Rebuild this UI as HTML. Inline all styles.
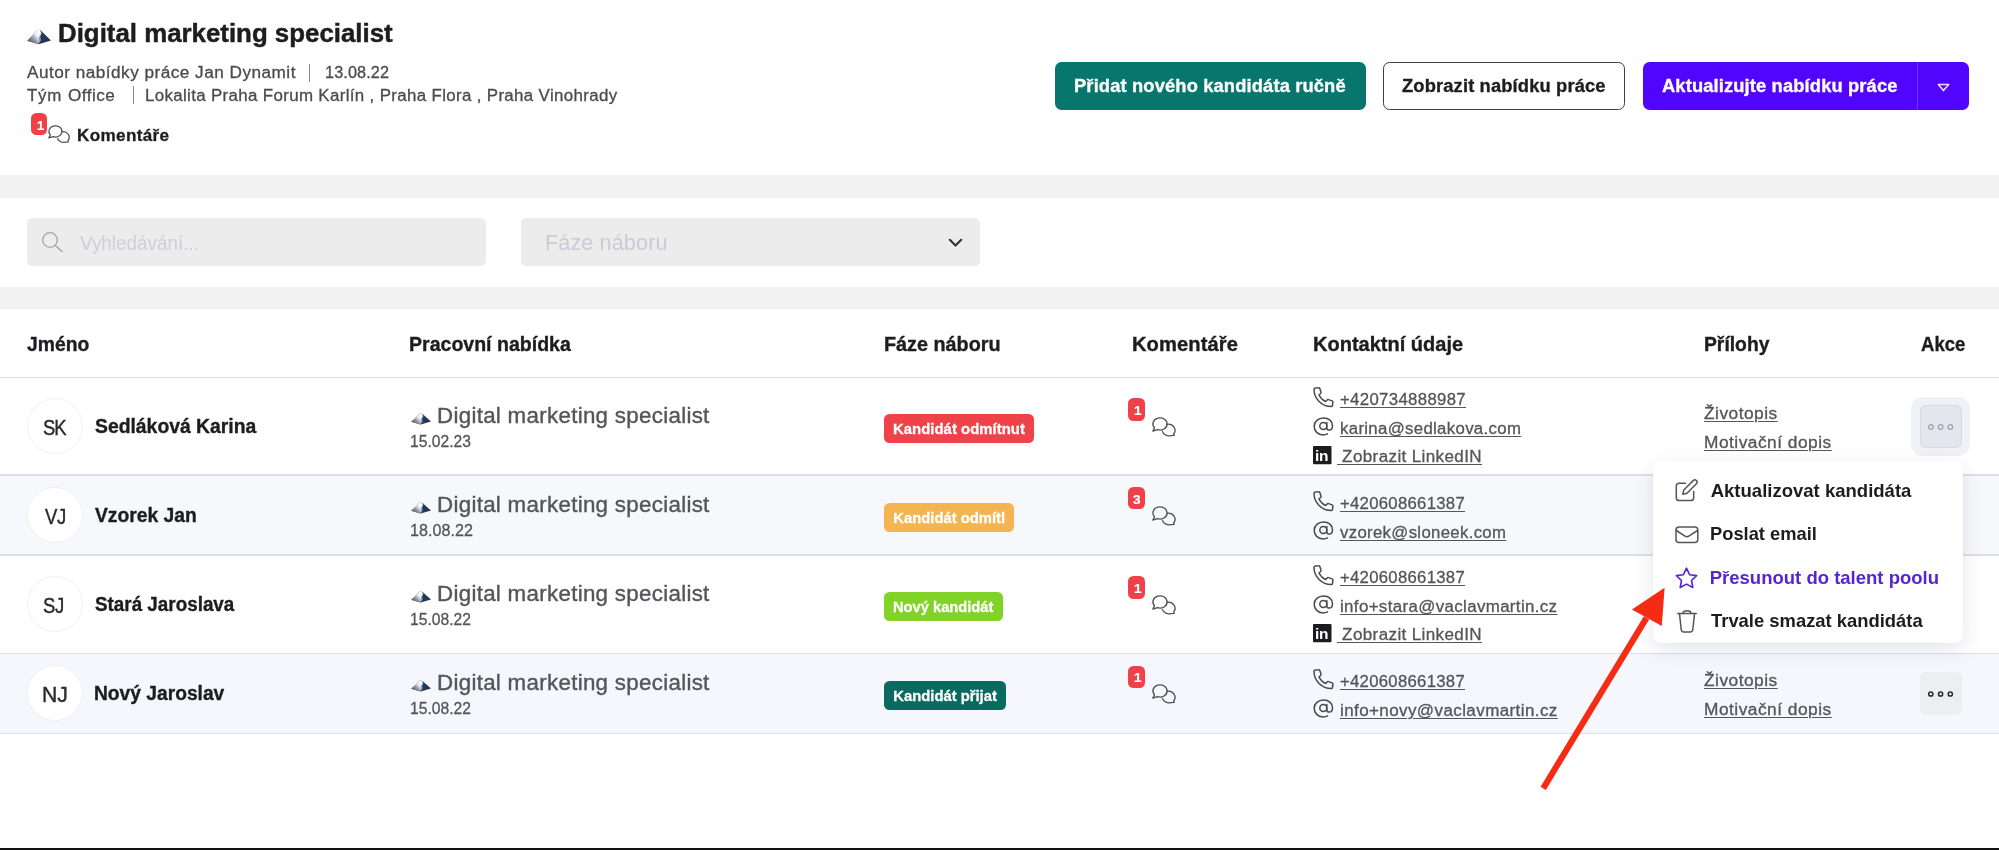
<!DOCTYPE html>
<html lang="cs"><head><meta charset="utf-8"><title>Digital marketing specialist</title><style>
*{box-sizing:border-box;margin:0;padding:0}
html,body{width:1999px;height:850px;overflow:hidden;background:#fff}
body{position:relative;font-family:"Liberation Sans", sans-serif;-webkit-font-smoothing:antialiased}
#app{position:absolute;left:0;top:0;width:1999px;height:850px;will-change:transform}
.tx{-webkit-text-stroke:0.018em;position:absolute;white-space:pre;line-height:1;display:block;transform-origin:0 50%}
.ph{-webkit-text-stroke:0}
.semi{-webkit-text-stroke:0}
.ul{text-decoration:underline;text-decoration-thickness:1.2px;text-underline-offset:2.2px;text-decoration-skip-ink:auto}
.ic{position:absolute;display:block;overflow:visible}
.band{position:absolute;left:0;width:1999px;background:#f1f1f1}
.field{position:absolute;top:218.200px;height:47.500px;background:#ececec;border-radius:5.500px}
.btn{position:absolute;top:62px;height:47.700px;border-radius:6.500px}
.hline{position:absolute;left:0;width:1999px;height:1.600px;background:#dcdfe6}
.rowbg{position:absolute;left:0;width:1999px;background:#f7f8fc}
.av{position:absolute;left:26.500px;width:56px;height:56px;border-radius:50%;background:#fff;border:1.500px solid #f0f0f2}
.badge{position:absolute;height:29.400px;border-radius:5.500px}
.cnt{position:absolute;width:17px;height:22.200px;border-radius:5.500px;background:#ef4147}
.sep{position:absolute;width:1.200px;height:18px;background:#8a8a90}
.menu{position:absolute;left:1652.500px;top:461px;width:310px;height:181.500px;background:#fff;border-radius:8px;box-shadow:0 7px 22px rgba(40,50,80,.12),0 0 2px rgba(40,50,80,.04)}
.act{position:absolute;width:42.500px;height:42.500px;border-radius:6px;background:#eceef2}
</style></head><body>
<div id="app">
<header>
<svg class="ic" style="left:27.2px;top:29.3px" width="24.2" height="15.4" viewBox="0 0 48 31" preserveAspectRatio="none"><defs><linearGradient id="ml27_29" x1="0" x2="1" y1="1" y2="0"><stop offset="0" stop-color="#3d424b"/><stop offset=".38" stop-color="#8e929d"/><stop offset=".62" stop-color="#e6e7f1"/><stop offset=".85" stop-color="#ffffff"/></linearGradient><linearGradient id="mr27_29" x1="0" x2="1" y1="0" y2="1"><stop offset="0" stop-color="#3c5a7a"/><stop offset=".5" stop-color="#1f3b5b"/><stop offset="1" stop-color="#2b2f4a"/></linearGradient></defs><path d="M0.500 23.500 L10 14 L19 3 C21 0.200 25 0 27.500 3 L47.500 23 L23 30.500 Z" fill="url(#mr27_29)"/><path d="M0.500 23.500 L10 14 L19 3 C21 0.500 24 0.200 26 1.500 L28 9 L24 17 L25 24 L22 30.500 Z" fill="url(#ml27_29)"/><path d="M24 1 L29.500 8 L26.500 15 L28 22 L23 30.500 L25 22 L23.500 15 L27 8 Z" fill="#dfe3ee" opacity=".55"/></svg>
<div class="sep" style="left:309px;top:63.500px"></div>
<div class="sep" style="left:132.500px;top:86px"></div>
<div class="cnt" style="left:30.800px;top:113.200px;width:16.600px;height:22.200px"></div>
<svg class="ic" style="left:47.6px;top:125.2px" width="22.1" height="18.4" viewBox="0 0 24 20" fill="none" stroke="#505057" stroke-width="1.35" stroke-linejoin="round" stroke-linecap="round"><path d="M0.900 14 L2.500 10.800 A7.100 6.100 0 1 1 5.600 12.700 Z"/><path d="M14.900 7.300 A6.800 6.100 0 0 1 21.600 17 L22.200 18.300 L19 18.600 A6.800 6.100 0 0 1 10.500 14.600"/></svg>
<div class="btn" style="left:1055px;width:310.500px;background:#07766c"></div>
<div class="btn" style="left:1382.500px;width:242.500px;background:#fff;border:1.900px solid #3d3d42"></div>
<div class="btn" style="left:1642.500px;width:326.200px;background:#5105fd"></div>
<div style="position:absolute;left:1917.300px;top:62px;width:1.200px;height:47.700px;background:#7236ff"></div>
<svg class="ic" style="left:1936.500px;top:83px" width="13" height="9" viewBox="0 0 13 9" fill="none" stroke="#f3d9ff" stroke-width="1.500" stroke-linejoin="round"><path d="M1.300 1.500h10.400L6.500 7.600z"/></svg>
<h1 class="tx" style="left:58.01px;top:18px;line-height:30px;font-size:26px;font-weight:700;color:#1d1d1f;letter-spacing:0.000px;transform:scaleX(0.9940)">Digital marketing specialist</h1>
<span class="tx" style="left:27.00px;top:64px;line-height:17px;font-size:16px;font-weight:400;color:#4b4b4f;letter-spacing:0.445px;transform:scaleX(1.0740)">Autor nabídky práce Jan Dynamit</span>
<span class="tx" style="left:324.99px;top:64px;line-height:17px;font-size:16px;font-weight:400;color:#4b4b4f;letter-spacing:0.102px;transform:scaleX(1.0145)">13.08.22</span>
<span class="tx" style="left:27.00px;top:87px;line-height:17px;font-size:16px;font-weight:400;color:#4b4b4f;letter-spacing:0.686px;transform:scaleX(1.0577)">Tým</span>
<span class="tx" style="left:68.00px;top:87px;line-height:17px;font-size:16px;font-weight:400;color:#4b4b4f;letter-spacing:0.453px;transform:scaleX(1.0714)">Office</span>
<span class="tx" style="left:144.94px;top:87px;line-height:17px;font-size:16px;font-weight:400;color:#4b4b4f;letter-spacing:0.321px;transform:scaleX(1.0562)">Lokalita Praha Forum Karlín , Praha Flora , Praha Vinohrady</span>
<span class="tx" style="left:77.26px;top:126px;line-height:18px;font-size:16.5px;font-weight:700;color:#1d1d1f;letter-spacing:0.319px;transform:scaleX(1.0381)">Komentáře</span>
<span class="tx" style="left:37.00px;top:118px;line-height:15px;font-size:13px;font-weight:700;color:#fff;letter-spacing:0.000px">1</span>
<span class="tx" style="left:1074.18px;top:76px;line-height:20px;font-size:18px;font-weight:700;color:#fff;letter-spacing:0.135px;transform:scaleX(1.0180)">Přidat nového kandidáta ručně</span>
<span class="tx" style="left:1402.00px;top:76px;line-height:20px;font-size:18px;font-weight:700;color:#1d1d1f;letter-spacing:0.136px;transform:scaleX(1.0181)">Zobrazit nabídku práce</span>
<span class="tx" style="left:1662.40px;top:76px;line-height:20px;font-size:18px;font-weight:700;color:#fff;letter-spacing:0.130px;transform:scaleX(1.0178)">Aktualizujte nabídku práce</span>
</header>
<section class="filters">
<div class="band" style="top:175px;height:22.500px"></div>
<div class="band" style="top:286.500px;height:22px"></div>
<div class="field" style="left:26.500px;width:459px"></div>
<div class="field" style="left:521px;width:458.500px"></div>
<svg class="ic" style="left:41px;top:231px" width="23" height="23" viewBox="0 0 23 23" fill="none" stroke="#a3a3ab" stroke-width="1.3" stroke-linecap="round"><circle cx="9" cy="9" r="7.300"/><path d="M14.400 14.600 21 20.600"/></svg>
<svg class="ic" style="left:948px;top:237.500px" width="15" height="10" viewBox="0 0 15 10" fill="none" stroke="#34343a" stroke-width="2.200" stroke-linecap="round" stroke-linejoin="round"><path d="M1.800 1.800 7.500 7.500 13.200 1.800"/></svg>
<span class="tx ph" style="left:80.00px;top:232px;line-height:22px;font-size:20px;font-weight:400;color:#cfcfd8;letter-spacing:0.000px;transform:scaleX(0.9442)">Vyhledávání...</span>
<span class="tx ph" style="left:544.99px;top:231px;line-height:24px;font-size:21.5px;font-weight:400;color:#cbcbd8;letter-spacing:0.078px;transform:scaleX(1.0081)">Fáze náboru</span>
</section>
<main class="table">
<div class="rowbg" style="top:475px;height:80px"></div>
<div class="rowbg" style="top:653.500px;height:80px;background:#f5f7fc"></div>
<div class="hline" style="top:376.6px"></div>
<div class="hline" style="top:474.4px"></div>
<div class="hline" style="top:554.2px"></div>
<div class="hline" style="top:652.5px"></div>
<div class="hline" style="top:732.8px"></div>
<div class="av" style="top:398.1px"></div>
<div class="av" style="top:486.9px"></div>
<div class="av" style="top:576.1px"></div>
<div class="av" style="top:665.2px"></div>
<div style="position:absolute;left:1911px;top:397px;width:59px;height:58.500px;border-radius:12px;background:#eff1f5"></div>
<div class="act" style="left:1919.500px;top:405px;background:#e3e6ec;border:1.200px solid #d6d9e1"></div>
<svg class="ic" style="left:1926px;top:421.500px" width="30" height="10" viewBox="0 0 30 10" fill="none" stroke="#9da2b3" stroke-width="1.300"><circle cx="4.800" cy="5" r="2.300"/><circle cx="14.600" cy="5" r="2.300"/><circle cx="24.300" cy="5" r="2.300"/></svg>
<div class="act" style="left:1919.500px;top:672px"></div>
<svg class="ic" style="left:1926px;top:688.500px" width="30" height="10" viewBox="0 0 30 10" fill="none" stroke="#2a2a2e" stroke-width="1.500"><circle cx="4.800" cy="5" r="2.100"/><circle cx="14.600" cy="5" r="2.100"/><circle cx="24.300" cy="5" r="2.100"/></svg>
<div class="badge" style="left:884.3px;top:413.7px;width:150px;background:#f04349"></div>
<div class="cnt" style="left:1128.3px;top:398.4px"></div>
<div class="badge" style="left:884.3px;top:502.5px;width:130px;background:#f4b550"></div>
<div class="cnt" style="left:1128.3px;top:487.2px"></div>
<div class="badge" style="left:884.3px;top:591.7px;width:118.8px;background:#82d328"></div>
<div class="cnt" style="left:1128.3px;top:576.4px"></div>
<div class="badge" style="left:884.3px;top:680.8px;width:121.8px;background:#0a6a60"></div>
<div class="cnt" style="left:1128.3px;top:665.5px"></div>
<svg class="ic" style="left:1151.5px;top:416.8px" width="24" height="20" viewBox="0 0 24 20" fill="none" stroke="#505057" stroke-width="1.35" stroke-linejoin="round" stroke-linecap="round"><path d="M0.900 14 L2.500 10.800 A7.100 6.100 0 1 1 5.600 12.700 Z"/><path d="M14.900 7.300 A6.800 6.100 0 0 1 21.600 17 L22.200 18.300 L19 18.600 A6.800 6.100 0 0 1 10.500 14.600"/></svg><svg class="ic" style="left:1312.8px;top:387.1px" width="21" height="21" viewBox="0 0 21 21" fill="none" stroke="#48484e" stroke-width="1.5" stroke-linejoin="round" stroke-linecap="round"><path d="M2.300 1.100 5.500.7c.6-.1 1.100.3 1.300.8l1.200 3.600c.2.500 0 1-.4 1.400L6 8c1.300 2.900 3.600 5.200 6.600 6.600l1.600-1.700c.4-.4.900-.5 1.400-.3l3.500 1.300c.5.200.9.700.8 1.300l-.4 3.100c-.1.700-.7 1.200-1.400 1.200C8.900 19.500 1 11.600 1 2.500c0-.7.600-1.300 1.300-1.400z"/></svg><svg class="ic" style="left:1313.2px;top:416.65000000000003px" width="21" height="19.400" viewBox="0 0 21 19" fill="none" stroke="#48484e" stroke-width="1.5" stroke-linecap="round"><circle cx="10.3" cy="8.700" r="3.500"/><path d="M13.800 5.200v5.300c0 1.400 1 2.400 2.400 2.400 2 0 3.300-1.800 3.300-4.400 0-4.500-3.800-7.700-9-7.700C5.200.800 1.200 4.300 1.200 9c0 4.900 3.600 8.700 8.900 8.700 1.700 0 3.200-.3 4.400-1"/></svg><svg class="ic" style="left:1312.8px;top:445.8px" width="19" height="18.500" viewBox="0 0 19 18.500"><rect width="18.500" height="18.200" rx="1" fill="#1c1c1e"/><text x="2.100" y="15.300" font-family='"Liberation Sans",sans-serif' font-weight="700" font-size="15.500" fill="#fff" letter-spacing="-0.5">in</text></svg><svg class="ic" style="left:1151.5px;top:505.6px" width="24" height="20" viewBox="0 0 24 20" fill="none" stroke="#505057" stroke-width="1.35" stroke-linejoin="round" stroke-linecap="round"><path d="M0.900 14 L2.500 10.800 A7.100 6.100 0 1 1 5.600 12.700 Z"/><path d="M14.900 7.300 A6.800 6.100 0 0 1 21.600 17 L22.200 18.300 L19 18.600 A6.800 6.100 0 0 1 10.500 14.600"/></svg><svg class="ic" style="left:1312.8px;top:490.90000000000003px" width="21" height="21" viewBox="0 0 21 21" fill="none" stroke="#48484e" stroke-width="1.5" stroke-linejoin="round" stroke-linecap="round"><path d="M2.300 1.100 5.500.7c.6-.1 1.100.3 1.300.8l1.200 3.600c.2.500 0 1-.4 1.400L6 8c1.300 2.900 3.600 5.200 6.600 6.600l1.600-1.700c.4-.4.900-.5 1.400-.3l3.500 1.300c.5.200.9.700.8 1.300l-.4 3.100c-.1.700-.7 1.200-1.400 1.200C8.900 19.500 1 11.600 1 2.500c0-.7.600-1.300 1.300-1.400z"/></svg><svg class="ic" style="left:1313.2px;top:520.8000000000001px" width="21" height="19.400" viewBox="0 0 21 19" fill="none" stroke="#48484e" stroke-width="1.5" stroke-linecap="round"><circle cx="10.3" cy="8.700" r="3.500"/><path d="M13.800 5.200v5.300c0 1.400 1 2.400 2.400 2.400 2 0 3.300-1.800 3.300-4.400 0-4.500-3.800-7.700-9-7.700C5.200.800 1.200 4.300 1.200 9c0 4.900 3.600 8.700 8.900 8.700 1.700 0 3.200-.3 4.400-1"/></svg><svg class="ic" style="left:1151.5px;top:594.8px" width="24" height="20" viewBox="0 0 24 20" fill="none" stroke="#505057" stroke-width="1.35" stroke-linejoin="round" stroke-linecap="round"><path d="M0.900 14 L2.500 10.800 A7.100 6.100 0 1 1 5.600 12.700 Z"/><path d="M14.900 7.300 A6.800 6.100 0 0 1 21.600 17 L22.200 18.300 L19 18.600 A6.800 6.100 0 0 1 10.500 14.600"/></svg><svg class="ic" style="left:1312.8px;top:565.1px" width="21" height="21" viewBox="0 0 21 21" fill="none" stroke="#48484e" stroke-width="1.5" stroke-linejoin="round" stroke-linecap="round"><path d="M2.300 1.100 5.500.7c.6-.1 1.100.3 1.300.8l1.200 3.600c.2.500 0 1-.4 1.400L6 8c1.300 2.900 3.600 5.200 6.600 6.600l1.600-1.700c.4-.4.900-.5 1.400-.3l3.500 1.300c.5.200.9.700.8 1.300l-.4 3.100c-.1.700-.7 1.200-1.400 1.200C8.900 19.500 1 11.600 1 2.500c0-.7.600-1.300 1.300-1.400z"/></svg><svg class="ic" style="left:1313.2px;top:594.65px" width="21" height="19.400" viewBox="0 0 21 19" fill="none" stroke="#48484e" stroke-width="1.5" stroke-linecap="round"><circle cx="10.3" cy="8.700" r="3.500"/><path d="M13.800 5.200v5.300c0 1.400 1 2.400 2.400 2.400 2 0 3.300-1.800 3.300-4.400 0-4.500-3.800-7.700-9-7.700C5.200.800 1.200 4.300 1.200 9c0 4.900 3.600 8.700 8.900 8.700 1.700 0 3.200-.3 4.400-1"/></svg><svg class="ic" style="left:1312.8px;top:623.8px" width="19" height="18.500" viewBox="0 0 19 18.500"><rect width="18.500" height="18.200" rx="1" fill="#1c1c1e"/><text x="2.100" y="15.300" font-family='"Liberation Sans",sans-serif' font-weight="700" font-size="15.500" fill="#fff" letter-spacing="-0.5">in</text></svg><svg class="ic" style="left:1151.5px;top:683.9px" width="24" height="20" viewBox="0 0 24 20" fill="none" stroke="#505057" stroke-width="1.35" stroke-linejoin="round" stroke-linecap="round"><path d="M0.900 14 L2.500 10.800 A7.100 6.100 0 1 1 5.600 12.700 Z"/><path d="M14.900 7.300 A6.800 6.100 0 0 1 21.600 17 L22.200 18.300 L19 18.600 A6.800 6.100 0 0 1 10.500 14.600"/></svg><svg class="ic" style="left:1312.8px;top:669.2px" width="21" height="21" viewBox="0 0 21 21" fill="none" stroke="#48484e" stroke-width="1.5" stroke-linejoin="round" stroke-linecap="round"><path d="M2.300 1.100 5.500.7c.6-.1 1.100.3 1.300.8l1.200 3.600c.2.500 0 1-.4 1.400L6 8c1.300 2.900 3.600 5.200 6.600 6.600l1.600-1.700c.4-.4.900-.5 1.400-.3l3.500 1.300c.5.200.9.700.8 1.300l-.4 3.100c-.1.700-.7 1.200-1.400 1.200C8.900 19.500 1 11.600 1 2.500c0-.7.600-1.300 1.300-1.400z"/></svg><svg class="ic" style="left:1313.2px;top:699.1px" width="21" height="19.400" viewBox="0 0 21 19" fill="none" stroke="#48484e" stroke-width="1.5" stroke-linecap="round"><circle cx="10.3" cy="8.700" r="3.500"/><path d="M13.800 5.200v5.300c0 1.400 1 2.400 2.400 2.400 2 0 3.300-1.800 3.300-4.400 0-4.500-3.800-7.700-9-7.700C5.200.800 1.200 4.300 1.200 9c0 4.900 3.600 8.700 8.900 8.700 1.700 0 3.200-.3 4.400-1"/></svg>
<svg class="ic" style="left:410.8px;top:412.90000000000003px" width="20.2" height="11.6" viewBox="0 0 48 31" preserveAspectRatio="none"><defs><linearGradient id="ml410_412" x1="0" x2="1" y1="1" y2="0"><stop offset="0" stop-color="#3d424b"/><stop offset=".38" stop-color="#8e929d"/><stop offset=".62" stop-color="#e6e7f1"/><stop offset=".85" stop-color="#ffffff"/></linearGradient><linearGradient id="mr410_412" x1="0" x2="1" y1="0" y2="1"><stop offset="0" stop-color="#3c5a7a"/><stop offset=".5" stop-color="#1f3b5b"/><stop offset="1" stop-color="#2b2f4a"/></linearGradient></defs><path d="M0.500 23.500 L10 14 L19 3 C21 0.200 25 0 27.500 3 L47.500 23 L23 30.500 Z" fill="url(#mr410_412)"/><path d="M0.500 23.500 L10 14 L19 3 C21 0.500 24 0.200 26 1.500 L28 9 L24 17 L25 24 L22 30.500 Z" fill="url(#ml410_412)"/><path d="M24 1 L29.500 8 L26.500 15 L28 22 L23 30.500 L25 22 L23.500 15 L27 8 Z" fill="#dfe3ee" opacity=".55"/></svg><svg class="ic" style="left:410.8px;top:501.70000000000005px" width="20.2" height="11.6" viewBox="0 0 48 31" preserveAspectRatio="none"><defs><linearGradient id="ml410_501" x1="0" x2="1" y1="1" y2="0"><stop offset="0" stop-color="#3d424b"/><stop offset=".38" stop-color="#8e929d"/><stop offset=".62" stop-color="#e6e7f1"/><stop offset=".85" stop-color="#ffffff"/></linearGradient><linearGradient id="mr410_501" x1="0" x2="1" y1="0" y2="1"><stop offset="0" stop-color="#3c5a7a"/><stop offset=".5" stop-color="#1f3b5b"/><stop offset="1" stop-color="#2b2f4a"/></linearGradient></defs><path d="M0.500 23.500 L10 14 L19 3 C21 0.200 25 0 27.500 3 L47.500 23 L23 30.500 Z" fill="url(#mr410_501)"/><path d="M0.500 23.500 L10 14 L19 3 C21 0.500 24 0.200 26 1.500 L28 9 L24 17 L25 24 L22 30.500 Z" fill="url(#ml410_501)"/><path d="M24 1 L29.500 8 L26.500 15 L28 22 L23 30.500 L25 22 L23.500 15 L27 8 Z" fill="#dfe3ee" opacity=".55"/></svg><svg class="ic" style="left:410.8px;top:590.9px" width="20.2" height="11.6" viewBox="0 0 48 31" preserveAspectRatio="none"><defs><linearGradient id="ml410_590" x1="0" x2="1" y1="1" y2="0"><stop offset="0" stop-color="#3d424b"/><stop offset=".38" stop-color="#8e929d"/><stop offset=".62" stop-color="#e6e7f1"/><stop offset=".85" stop-color="#ffffff"/></linearGradient><linearGradient id="mr410_590" x1="0" x2="1" y1="0" y2="1"><stop offset="0" stop-color="#3c5a7a"/><stop offset=".5" stop-color="#1f3b5b"/><stop offset="1" stop-color="#2b2f4a"/></linearGradient></defs><path d="M0.500 23.500 L10 14 L19 3 C21 0.200 25 0 27.500 3 L47.500 23 L23 30.500 Z" fill="url(#mr410_590)"/><path d="M0.500 23.500 L10 14 L19 3 C21 0.500 24 0.200 26 1.500 L28 9 L24 17 L25 24 L22 30.500 Z" fill="url(#ml410_590)"/><path d="M24 1 L29.500 8 L26.500 15 L28 22 L23 30.500 L25 22 L23.500 15 L27 8 Z" fill="#dfe3ee" opacity=".55"/></svg><svg class="ic" style="left:410.8px;top:680.0px" width="20.2" height="11.6" viewBox="0 0 48 31" preserveAspectRatio="none"><defs><linearGradient id="ml410_680" x1="0" x2="1" y1="1" y2="0"><stop offset="0" stop-color="#3d424b"/><stop offset=".38" stop-color="#8e929d"/><stop offset=".62" stop-color="#e6e7f1"/><stop offset=".85" stop-color="#ffffff"/></linearGradient><linearGradient id="mr410_680" x1="0" x2="1" y1="0" y2="1"><stop offset="0" stop-color="#3c5a7a"/><stop offset=".5" stop-color="#1f3b5b"/><stop offset="1" stop-color="#2b2f4a"/></linearGradient></defs><path d="M0.500 23.500 L10 14 L19 3 C21 0.200 25 0 27.500 3 L47.500 23 L23 30.500 Z" fill="url(#mr410_680)"/><path d="M0.500 23.500 L10 14 L19 3 C21 0.500 24 0.200 26 1.500 L28 9 L24 17 L25 24 L22 30.500 Z" fill="url(#ml410_680)"/><path d="M24 1 L29.500 8 L26.500 15 L28 22 L23 30.500 L25 22 L23.500 15 L27 8 Z" fill="#dfe3ee" opacity=".55"/></svg>
<span class="tx" style="left:27.00px;top:333px;line-height:22px;font-size:20px;font-weight:700;color:#1d1d1f;letter-spacing:0.000px;transform:scaleX(0.9650)">Jméno</span>
<span class="tx" style="left:409.42px;top:333px;line-height:22px;font-size:20px;font-weight:700;color:#1d1d1f;letter-spacing:0.000px;transform:scaleX(0.9771)">Pracovní nabídka</span>
<span class="tx" style="left:883.71px;top:333px;line-height:22px;font-size:20px;font-weight:700;color:#1d1d1f;letter-spacing:0.000px;transform:scaleX(0.9890)">Fáze náboru</span>
<span class="tx" style="left:1132.09px;top:333px;line-height:22px;font-size:20px;font-weight:700;color:#1d1d1f;letter-spacing:0.075px;transform:scaleX(1.0072)">Komentáře</span>
<span class="tx" style="left:1313.00px;top:333px;line-height:22px;font-size:20px;font-weight:700;color:#1d1d1f;letter-spacing:0.004px">Kontaktní údaje</span>
<span class="tx" style="left:1703.64px;top:333px;line-height:22px;font-size:20px;font-weight:700;color:#1d1d1f;letter-spacing:0.000px;transform:scaleX(0.9650)">Přílohy</span>
<span class="tx" style="left:1920.50px;top:333px;line-height:22px;font-size:20px;font-weight:700;color:#1d1d1f;letter-spacing:0.000px;transform:scaleX(0.9268)">Akce</span>
<span class="tx ini" style="left:43.00px;top:416px;line-height:24px;font-size:21.5px;font-weight:400;color:#2a2a2e;letter-spacing:-1.201px;transform:scaleX(0.8600)">SK</span>
<span class="tx" style="left:95.40px;top:415px;line-height:22px;font-size:20.3px;font-weight:700;color:#1d1d1f;letter-spacing:0.000px;transform:scaleX(0.9540)">Sedláková Karina</span>
<span class="tx" style="left:436.96px;top:404px;line-height:24px;font-size:21.5px;font-weight:400;color:#55555a;letter-spacing:0.285px;transform:scaleX(1.0385)">Digital marketing specialist</span>
<span class="tx" style="left:410.02px;top:433px;line-height:17px;font-size:16px;font-weight:400;color:#55555a;letter-spacing:0.000px;transform:scaleX(0.9775)">15.02.23</span>
<span class="tx" style="left:893.30px;top:421px;line-height:16px;font-size:14.8px;font-weight:700;color:#fff;letter-spacing:0.035px;transform:scaleX(1.0052)">Kandidát odmítnut</span>
<span class="tx" style="left:1133.90px;top:403px;line-height:15px;font-size:13.5px;font-weight:700;color:#fff;letter-spacing:0.000px">1</span>
<a class="tx ul" style="left:1340.20px;top:391px;line-height:17px;font-size:16px;font-weight:400;color:#55555a;letter-spacing:0.327px;transform:scaleX(1.0468)">+420734888987</a>
<a class="tx ul" style="left:1340.20px;top:420px;line-height:17px;font-size:16px;font-weight:400;color:#55555a;letter-spacing:0.315px;transform:scaleX(1.0484)">karina@sedlakova.com</a>
<a class="tx ul" style="left:1337.00px;top:448px;line-height:17px;font-size:16px;font-weight:400;color:#55555a;letter-spacing:0.356px;transform:scaleX(1.0642)">&nbsp;Zobrazit LinkedIN</a>
<a class="tx ul" style="left:1704.40px;top:405px;line-height:17px;font-size:16px;font-weight:400;color:#55555a;letter-spacing:0.447px;transform:scaleX(1.0831)">Životopis</a>
<a class="tx ul" style="left:1704.40px;top:434px;line-height:17px;font-size:16px;font-weight:400;color:#55555a;letter-spacing:0.459px;transform:scaleX(1.0818)">Motivační dopis</a>
<span class="tx ini" style="left:44.50px;top:505px;line-height:24px;font-size:21.5px;font-weight:400;color:#2a2a2e;letter-spacing:-0.503px;transform:scaleX(0.8600)">VJ</span>
<span class="tx" style="left:95.40px;top:504px;line-height:22px;font-size:20.3px;font-weight:700;color:#1d1d1f;letter-spacing:0.000px;transform:scaleX(0.9512)">Vzorek Jan</span>
<span class="tx" style="left:436.96px;top:493px;line-height:24px;font-size:21.5px;font-weight:400;color:#55555a;letter-spacing:0.285px;transform:scaleX(1.0385)">Digital marketing specialist</span>
<span class="tx" style="left:409.99px;top:522px;line-height:17px;font-size:16px;font-weight:400;color:#55555a;letter-spacing:0.039px;transform:scaleX(1.0055)">18.08.22</span>
<span class="tx" style="left:893.30px;top:510px;line-height:16px;font-size:14.8px;font-weight:700;color:#fff;letter-spacing:0.000px">Kandidát odmítl</span>
<span class="tx" style="left:1133.00px;top:492px;line-height:15px;font-size:13.5px;font-weight:700;color:#fff;letter-spacing:0.000px">3</span>
<a class="tx ul" style="left:1340.20px;top:495px;line-height:17px;font-size:16px;font-weight:400;color:#55555a;letter-spacing:0.295px;transform:scaleX(1.0420)">+420608661387</a>
<a class="tx ul" style="left:1340.20px;top:524px;line-height:17px;font-size:16px;font-weight:400;color:#55555a;letter-spacing:0.313px;transform:scaleX(1.0471)">vzorek@sloneek.com</a>
<span class="tx ini" style="left:43.00px;top:594px;line-height:24px;font-size:21.5px;font-weight:400;color:#2a2a2e;letter-spacing:-0.503px;transform:scaleX(0.8600)">SJ</span>
<span class="tx" style="left:95.40px;top:593px;line-height:22px;font-size:20.3px;font-weight:700;color:#1d1d1f;letter-spacing:0.000px;transform:scaleX(0.9291)">Stará Jaroslava</span>
<span class="tx" style="left:436.96px;top:582px;line-height:24px;font-size:21.5px;font-weight:400;color:#55555a;letter-spacing:0.285px;transform:scaleX(1.0385)">Digital marketing specialist</span>
<span class="tx" style="left:410.02px;top:611px;line-height:17px;font-size:16px;font-weight:400;color:#55555a;letter-spacing:0.000px;transform:scaleX(0.9775)">15.08.22</span>
<span class="tx" style="left:893.30px;top:599px;line-height:16px;font-size:14.8px;font-weight:700;color:#fff;letter-spacing:0.000px;transform:scaleX(0.9920)">Nový kandidát</span>
<span class="tx" style="left:1133.90px;top:581px;line-height:15px;font-size:13.5px;font-weight:700;color:#fff;letter-spacing:0.000px">1</span>
<a class="tx ul" style="left:1340.20px;top:569px;line-height:17px;font-size:16px;font-weight:400;color:#55555a;letter-spacing:0.295px;transform:scaleX(1.0420)">+420608661387</a>
<a class="tx ul" style="left:1340.20px;top:598px;line-height:17px;font-size:16px;font-weight:400;color:#55555a;letter-spacing:0.331px;transform:scaleX(1.0563)">info+stara@vaclavmartin.cz</a>
<a class="tx ul" style="left:1337.00px;top:626px;line-height:17px;font-size:16px;font-weight:400;color:#55555a;letter-spacing:0.356px;transform:scaleX(1.0642)">&nbsp;Zobrazit LinkedIN</a>
<span class="tx ini" style="left:42.01px;top:683px;line-height:24px;font-size:21.5px;font-weight:400;color:#2a2a2e;letter-spacing:0.000px;transform:scaleX(0.9867)">NJ</span>
<span class="tx" style="left:94.45px;top:682px;line-height:22px;font-size:20.3px;font-weight:700;color:#1d1d1f;letter-spacing:0.000px;transform:scaleX(0.9471)">Nový Jaroslav</span>
<span class="tx" style="left:436.96px;top:671px;line-height:24px;font-size:21.5px;font-weight:400;color:#55555a;letter-spacing:0.285px;transform:scaleX(1.0385)">Digital marketing specialist</span>
<span class="tx" style="left:410.02px;top:700px;line-height:17px;font-size:16px;font-weight:400;color:#55555a;letter-spacing:0.000px;transform:scaleX(0.9775)">15.08.22</span>
<span class="tx" style="left:893.30px;top:688px;line-height:16px;font-size:14.8px;font-weight:700;color:#fff;letter-spacing:0.000px">Kandidát přijat</span>
<span class="tx" style="left:1133.90px;top:670px;line-height:15px;font-size:13.5px;font-weight:700;color:#fff;letter-spacing:0.000px">1</span>
<a class="tx ul" style="left:1340.20px;top:673px;line-height:17px;font-size:16px;font-weight:400;color:#55555a;letter-spacing:0.295px;transform:scaleX(1.0420)">+420608661387</a>
<a class="tx ul" style="left:1340.20px;top:702px;line-height:17px;font-size:16px;font-weight:400;color:#55555a;letter-spacing:0.377px;transform:scaleX(1.0627)">info+novy@vaclavmartin.cz</a>
<a class="tx ul" style="left:1704.40px;top:672px;line-height:17px;font-size:16px;font-weight:400;color:#55555a;letter-spacing:0.447px;transform:scaleX(1.0831)">Životopis</a>
<a class="tx ul" style="left:1704.40px;top:701px;line-height:17px;font-size:16px;font-weight:400;color:#55555a;letter-spacing:0.459px;transform:scaleX(1.0818)">Motivační dopis</a>
</main>
<nav class="dropdown">
<div class="menu"></div>
<svg class="ic" style="left:1674.500px;top:479px" width="24" height="23" viewBox="0 0 24 23" fill="none" stroke="#55555c" stroke-width="1.500" stroke-linejoin="round" stroke-linecap="round"><path d="M10.500 4.200H4.200c-1.600 0-2.900 1.300-2.900 2.900v11.600c0 1.600 1.300 2.900 2.900 2.900h11.600c1.600 0 2.900-1.300 2.900-2.900v-6.200"/><path d="M18.200 1.600c.9-.9 2.300-.9 3.200 0s.9 2.300 0 3.200L12 14.200l-4.200 1 1-4.200z"/></svg>
<svg class="ic" style="left:1674.500px;top:525.500px" width="24" height="18" viewBox="0 0 24 18" fill="none" stroke="#55555c" stroke-width="1.500" stroke-linejoin="round" stroke-linecap="round"><rect x="1" y="1" width="21.800" height="15.600" rx="3"/><path d="M1.300 4.500 10 10.200c1.200.8 2.600.8 3.800 0l8.700-5.700"/></svg>
<svg class="ic" style="left:1675px;top:567px" width="23" height="22" viewBox="0 0 23 22" fill="none" stroke="#5724d3" stroke-width="1.600" stroke-linejoin="round"><path d="M11.500 1.200l3.100 6.500 7 .9-5.100 4.900 1.300 7-6.300-3.400-6.300 3.400 1.300-7L1.400 8.600l7-.9z"/></svg>
<svg class="ic" style="left:1676.500px;top:609.500px" width="20" height="23" viewBox="0 0 20 23" fill="none" stroke="#55555c" stroke-width="1.500" stroke-linejoin="round" stroke-linecap="round"><path d="M0.700 3.600h18.600"/><path d="M6 3.400C6 1.600 7.400.700 10 .700s4 .9 4 2.700"/><path d="M2.500 3.900l1.700 15.600c.15 1.400 1.100 2.400 2.500 2.400h6.600c1.400 0 2.350-1 2.500-2.400L17.500 3.900"/></svg>
<span class="tx semi" style="left:1710.70px;top:480px;line-height:21px;font-size:18.5px;font-weight:700;color:#1d1d1f;letter-spacing:0.011px">Aktualizovat kandidáta</span>
<span class="tx semi" style="left:1709.71px;top:523px;line-height:21px;font-size:18.5px;font-weight:700;color:#1d1d1f;letter-spacing:0.000px;transform:scaleX(0.9894)">Poslat email</span>
<span class="tx semi" style="left:1709.70px;top:567px;line-height:21px;font-size:18.5px;font-weight:700;color:#5724d3;letter-spacing:0.008px">Přesunout do talent poolu</span>
<span class="tx semi" style="left:1710.70px;top:610px;line-height:21px;font-size:18.5px;font-weight:700;color:#1d1d1f;letter-spacing:0.000px;transform:scaleX(0.9946)">Trvale smazat kandidáta</span>
</nav>
<svg class="ic" style="left:0;top:0" width="1999" height="850" viewBox="0 0 1999 850"><path d="M1543.200 788.300 1646.500 617.800" stroke="#f52b13" stroke-width="6.200" fill="none"/><path d="M1664.600 587.800 1631.900 609.500 1661.800 625.900z" fill="#f52b13"/></svg>
<div style="position:absolute;left:0;top:848px;width:1999px;height:2px;background:#111"></div>
</div>
</body></html>
